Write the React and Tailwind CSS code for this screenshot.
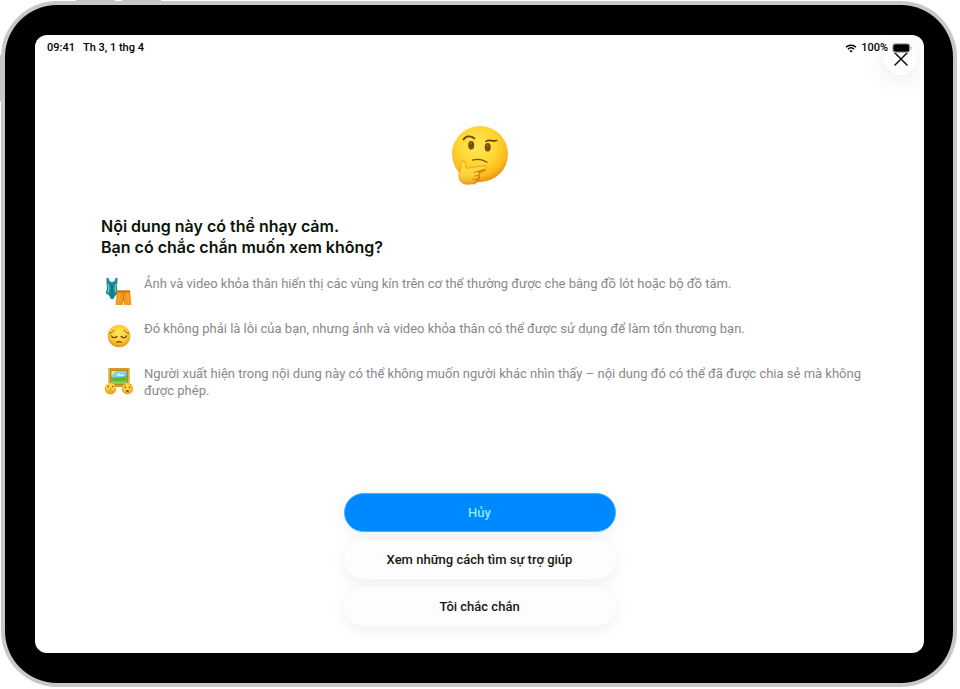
import React from 'react';

function ThinkingFace() {
    return (
        <svg viewBox="0 0 60 60" className="h-[60px] w-[60px]" aria-hidden="true">
            <defs>
                <radialGradient id="face" cx="0.45" cy="0.36" r="0.66">
                    <stop offset="0" stopColor="#ffe657" />
                    <stop offset="0.5" stopColor="#ffd735" />
                    <stop offset="0.82" stopColor="#fbb91c" />
                    <stop offset="1" stopColor="#e8890d" />
                </radialGradient>
                <linearGradient id="hand" x1="0" y1="0" x2="0" y2="1">
                    <stop offset="0" stopColor="#ffdc42" />
                    <stop offset="0.6" stopColor="#ffd23c" />
                    <stop offset="1" stopColor="#f0a31c" />
                </linearGradient>
            </defs>
            <circle cx="30" cy="29" r="28" fill="url(#face)" />
            <ellipse cx="21.200" cy="20.200" rx="3" ry="4.200" fill="#7a4a12" />
            <ellipse cx="37.700" cy="22.200" rx="3" ry="4.200" fill="#7a4a12" />
            <circle cx="21" cy="18.500" r="1" fill="#a9702b" />
            <circle cx="37.500" cy="20.500" r="1" fill="#a9702b" />
            <path d="M13.500 14.500C16 10.500 21 10.500 24.500 13.500" fill="none" stroke="#70400d" strokeWidth="1.700" strokeLinecap="round" />
            <path d="M36 16.500C39 13.500 43 17 46.500 15.500" fill="none" stroke="#70400d" strokeWidth="1.700" strokeLinecap="round" />
            <path d="M22.500 35.200C27 34 33 34.500 37 37.200" fill="none" stroke="#80500f" strokeWidth="1.300" strokeLinecap="round" />
            <path d="M35.500 44.500L28.500 47.500L29 52L27.500 56L23 59" fill="none" stroke="#c96f08" strokeWidth="2.200" opacity="0.700" />
            <path
                d="M12 36C14 35 15.300 36.500 15.500 39.500L16.300 43.200C21 43.200 28 41 34 40.600C37 40.600 37.200 43.500 34.500 44.500L27.500 46.700C29.500 47.500 29 50 27.800 50.500C28.700 52 28 53.500 26.800 54C26.500 57 23 59.300 18.500 59.300C12 59.300 8.500 56 8.800 49.500C9 46 11 44.500 11 42C11 40 9.800 37 12 36Z"
                fill="url(#hand)"
                stroke="#dc8f14"
                strokeWidth="0.700"
            />
            <path d="M34.500 44.500L24 47.500M27.800 50.500L24 51.200M26.800 54L23 54.500" fill="none" stroke="#c4720c" strokeWidth="0.800" strokeLinecap="round" />
        </svg>
    );
}

function SwimwearIcon() {
    return (
        <svg viewBox="0 0 30 30" className="h-[30px] w-[30px]" aria-hidden="true">
            <path d="M2.500 2H4.500C5 5 6.500 6 8 6S11 5 11.500 2H13.500C13.200 6 13.500 8 12.900 11.500C12.900 14.500 14.200 16 14 18C12 18.500 10.300 20.500 9.500 23H6.800C6 20 4 18 1.800 17.500C1.800 15.500 3.200 13.500 2.900 11C2.200 8 2.700 5.500 2.500 2Z" fill="#168b98" />
            <path d="M3.600 8C5 10 5.300 13 4 16.500M12.500 8C11 10 10.800 13 12.200 16" fill="none" stroke="#6fd0c5" strokeWidth="1.300" />
            <path d="M8 9V21" stroke="#0f7280" strokeWidth="1.500" />
            <path d="M13 14.500H26L27.500 29H20.200L19.500 25L18.800 29H11.500Z" fill="#f09a1a" />
            <path d="M13 14.500H26L26.200 16.500H12.800Z" fill="#cf720b" />
            <path d="M19.500 16.500V25" stroke="#c97109" strokeWidth="0.800" />
            <path d="M15.500 18L14.500 28M23.700 18L24.500 28" stroke="#f8ae35" strokeWidth="1" />
        </svg>
    );
}

function PensiveIcon() {
    return (
        <svg viewBox="0 0 30 30" className="h-[30px] w-[30px]" aria-hidden="true">
            <defs>
                <radialGradient id="pensive" cx="0.5" cy="0.38" r="0.62">
                    <stop offset="0" stopColor="#ffe75d" />
                    <stop offset="0.6" stopColor="#fdcd36" />
                    <stop offset="1" stopColor="#e3920f" />
                </radialGradient>
            </defs>
            <circle cx="15" cy="15" r="11.300" fill="url(#pensive)" />
            <path d="M5.500 12.300C7.500 11.800 9.200 10.800 10 9.300M24.500 12.300C22.500 11.800 20.800 10.800 20 9.300" fill="none" stroke="#8c5a14" strokeWidth="0.900" strokeLinecap="round" />
            <path d="M7.500 15C8.500 17 11.500 17.200 12.800 15.500M22.500 15C21.500 17 18.500 17.200 17.200 15.500" fill="none" stroke="#70400d" strokeWidth="1.300" strokeLinecap="round" />
            <path d="M12.500 21.200C14 20.500 16 20.500 17.500 21.200" fill="none" stroke="#70400d" strokeWidth="1.200" strokeLinecap="round" />
        </svg>
    );
}

function PictureIcon() {
    return (
        <svg viewBox="0 0 30 30" className="h-[30px] w-[30px]" aria-hidden="true">
            <defs>
                <radialGradient id="small" cx="0.5" cy="0.35" r="0.65">
                    <stop offset="0" stopColor="#ffe55a" />
                    <stop offset="0.6" stopColor="#fbc531" />
                    <stop offset="1" stopColor="#df8f14" />
                </radialGradient>
            </defs>
            <rect x="4.500" y="2" width="21" height="19" fill="#b8881a" />
            <rect x="5.500" y="3" width="19" height="17" fill="none" stroke="#dfb33c" />
            <rect x="7.500" y="5" width="15" height="13" fill="#7fd0ef" />
            <path d="M7.500 5H12L7.500 10Z" fill="#ffe96a" />
            <path d="M13 8.500C14 6.500 16 7.500 17 8.500C19 7 20.500 8.500 20 10H12.500Z" fill="#c8ecf9" />
            <path d="M7.500 12C12 10 15 12.500 22.500 10V18H7.500Z" fill="#5fb53e" />
            <path d="M7.500 15C12 14 16 17 22.500 14V18H7.500Z" fill="#85cf50" />
            <circle cx="6.500" cy="22.500" r="5.700" fill="url(#small)" />
            <circle cx="23.500" cy="22.500" r="5.700" fill="url(#small)" />
            <path d="M3.500 20.500H5M8 20.500H9.500" stroke="#70400d" strokeWidth="1" />
            <path d="M4.800 28C3.600 26.500 4.800 25 5.900 24.500L6.200 21.500H7L7.400 24.800C9.400 25.500 9.400 27.500 8.400 28Z" fill="#f6b02a" stroke="#d08c1c" strokeWidth="0.400" />
            <circle cx="21.500" cy="21.300" r="0.800" fill="#70400d" />
            <circle cx="25.500" cy="21.300" r="0.800" fill="#70400d" />
            <path d="M19.800 19.200L21.500 18.700M27.200 19.200L25.500 18.700" stroke="#8c5a14" strokeWidth="0.600" />
            <ellipse cx="23.500" cy="25" rx="1.500" ry="0.900" fill="#80500f" />
        </svg>
    );
}

function StatusBar() {
    return (
        <div className="pointer-events-none relative z-10 flex items-center justify-between px-3 pt-[5px] text-[11px] leading-4 font-medium text-black">
            <div className="flex gap-2">
                <span>09:41</span>
                <span>Th 3, 1 thg 4</span>
            </div>
            <div className="flex items-center gap-1">
                <svg viewBox="0 0 12 9" className="h-[9px] w-3" aria-hidden="true">
                    <path d="M1 3.300C3.800 0.600 8.200 0.600 11 3.300M2.900 5.300C4.700 3.600 7.300 3.600 9.100 5.300" fill="none" stroke="#000" strokeWidth="1.400" />
                    <path d="M6 8.600L4.200 6.800C5.200 5.900 6.800 5.900 7.800 6.800Z" />
                </svg>
                <span>100%</span>
                <svg viewBox="0 0 20 10" className="h-[10px] w-5" aria-hidden="true">
                    <rect x="0.500" y="0.500" width="17.500" height="9" rx="2.800" fill="#fff" stroke="#b4b4b4" />
                    <rect x="1.300" y="1.300" width="16" height="7.400" rx="1.800" />
                    <path d="M18.900 3.500C20 4 20 6 18.900 6.500Z" fill="#a8a8a8" />
                </svg>
            </div>
        </div>
    );
}

const reasons = [
    {
        icon: <SwimwearIcon />,
        text: 'Ảnh và video khỏa thân hiển thị các vùng kín trên cơ thể thường được che bằng đồ lót hoặc bộ đồ tắm.',
    },
    {
        icon: <PensiveIcon />,
        text: 'Đó không phải là lỗi của bạn, nhưng ảnh và video khỏa thân có thể được sử dụng để làm tổn thương bạn.',
    },
    {
        icon: <PictureIcon />,
        text: 'Người xuất hiện trong nội dung này có thể không muốn người khác nhìn thấy – nội dung đó có thể đã được chia sẻ mà không được phép.',
    },
];

function ActionButton({ primary, children }) {
    return (
        <button
            type="button"
            className={`h-[39px] w-full rounded-full text-[13px] font-medium shadow-[0_3px_16px_rgba(0,0,0,0.07)] ${
                primary ? 'border border-[#39b4ff] bg-[#0088ff] text-[#8beaff]' : 'bg-[#fdfdfd] text-[#14190f]'
            }`}
        >
            {children}
        </button>
    );
}

export default function App() {
    return (
        <div className="relative flex min-h-screen bg-white pt-px pr-[3px] pb-[2px] pl-px font-['Roboto','Liberation_Sans',sans-serif]">
            {/* hardware buttons */}
            <div className="absolute top-0 left-[76px] h-1 w-[39px] bg-[#c6c5ca]" />
            <div className="absolute top-0 left-[122px] h-1 w-[39px] bg-[#c6c5ca]" />
            <div className="absolute top-[55px] left-0 h-[46px] w-1 bg-[#c6c5ca]" />

            <div className="relative flex flex-1 rounded-[56px] bg-[#c8c7cb] p-1">
                <div className="flex flex-1 rounded-[52px] bg-black p-[30px] pr-[29px]">
                    <main className="relative flex flex-1 flex-col overflow-hidden rounded-xl bg-white">
                        <StatusBar />
                        <button
                            type="button"
                            aria-label="Đóng"
                            className="absolute top-[7px] right-[7px] flex h-[33px] w-[33px] items-center justify-center rounded-full bg-[#fefefe] shadow-[0_4px_24px_rgba(0,0,0,0.09)]"
                        >
                            <svg viewBox="0 0 14 14" className="h-[14px] w-[14px]" aria-hidden="true">
                                <path d="M1 1L13 13M13 1L1 13" stroke="#111" strokeWidth="1.500" strokeLinecap="round" />
                            </svg>
                        </button>

                        <div className="flex flex-1 flex-col px-[60px] pt-[69px] pb-[27px]">
                            <div className="flex justify-center">
                                <ThinkingFace />
                            </div>
                            <h1 className="mt-[31px] px-[6px] font-['Inter','Liberation_Sans',sans-serif] text-base leading-[21px] font-semibold text-[#0c1407]">
                                Nội dung này có thể nhạy cảm.
                                <br />
                                Bạn có chắc chắn muốn xem không?
                            </h1>
                            <ul className="mt-[17px] flex flex-col gap-[14px]">
                                {reasons.map((reason) => (
                                    <li key={reason.text} className="flex items-start gap-[10px] pl-[9px]">
                                        <span className="shrink-0 pt-px">{reason.icon}</span>
                                        <p className="text-[13px] leading-[17px] text-[#88888b]">{reason.text}</p>
                                    </li>
                                ))}
                            </ul>
                            <div className="mx-auto mt-auto flex w-[272px] flex-col gap-2">
                                <ActionButton primary>Hủy</ActionButton>
                                <ActionButton>Xem những cách tìm sự trợ giúp</ActionButton>
                                <ActionButton>Tôi chắc chắn</ActionButton>
                            </div>
                        </div>
                    </main>
                </div>
            </div>
        </div>
    );
}
